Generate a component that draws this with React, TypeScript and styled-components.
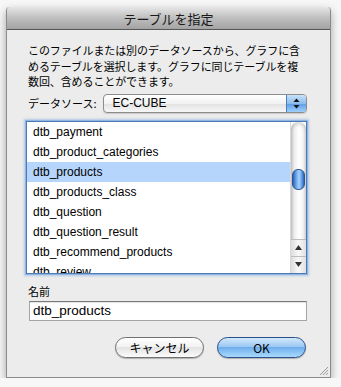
import React from "react"
import styled, { createGlobalStyle } from "styled-components"

const GlobalStyle = createGlobalStyle`
  html, body {
    margin: 0;
    padding: 0;
    background: #f7f7f7;
  }
  body {
    font-family: "Liberation Sans", "Noto Sans CJK JP", sans-serif;
  }
`

const tables = [
  "dtb_payment",
  "dtb_product_categories",
  "dtb_products",
  "dtb_products_class",
  "dtb_question",
  "dtb_question_result",
  "dtb_recommend_products",
  "dtb_review",
]

const jp = `"Noto Sans CJK JP", "Liberation Sans", sans-serif`

const Window = styled.div`
  margin: 7px 0 0 6px;
  width: 325px;
  height: 371px;
  background: #ececec;
  border: 1px solid #8a8a8a;
  border-top: none;
  box-sizing: border-box;
  box-shadow: 0 4px 10px rgba(0, 0, 0, 0.35);
  display: flex;
  flex-direction: column;
  position: relative;
  border-radius: 4px 4px 0 0;
`

const TitleBar = styled.div`
  height: 23px;
  flex: none;
  background: linear-gradient(#e6e6e6, #c2c2c2 45%, #a3a3a3);
  border-bottom: 1px solid #575757;
  border-radius: 4px 4px 0 0;
  box-sizing: border-box;
  display: flex;
  align-items: center;
  justify-content: center;
  font-family: ${jp};
  font-size: 13px;
  color: #1a1a1a;
  padding-top: 1px;
`

const Body = styled.div`
  padding: 13px 23px 0 19px;
  display: flex;
  flex-direction: column;
`

const Description = styled.p`
  margin: 0 0 0 2px;
  font-family: ${jp};
  font-size: 11px;
  line-height: 15.5px;
  color: #000;
  letter-spacing: -0.1px;
`

const SourceRow = styled.div`
  display: flex;
  align-items: center;
  margin-top: 4px;
  gap: 6px;
`

const Label = styled.span`
  font-family: ${jp};
  font-size: 11px;
  color: #000;
  margin-left: 2px;
`

const Popup = styled.div`
  flex: 1;
  height: 19px;
  box-sizing: border-box;
  border: 1px solid #8c8c8c;
  border-radius: 4px;
  background: linear-gradient(#ffffff, #f2f2f2 50%, #e2e2e2 51%, #f7f7f7);
  display: flex;
  align-items: center;
  overflow: hidden;
  box-shadow: 0 1px 1px rgba(0, 0, 0, 0.15);
`

const PopupText = styled.span`
  flex: 1;
  padding-left: 9px;
  font-size: 12px;
  color: #000;
`

const PopupArrows = styled.div`
  width: 19px;
  height: 100%;
  background: linear-gradient(#c9e2fb, #8bbcee 50%, #5d9be6 51%, #9fd0fb);
  border-left: 1px solid #4f7cb8;
  display: flex;
  align-items: center;
  justify-content: center;
`

const ListBox = styled.div`
  margin: 8px 0 0 0;
  height: 153px;
  box-sizing: border-box;
  border: 1px solid #4d79b4;
  box-shadow: 0 0 0 1px #8fb5e3, 0 0 2px 2px rgba(120, 165, 225, 0.5);
  background: #fff;
  display: flex;
  overflow: hidden;
`

const Rows = styled.div`
  flex: 1;
  overflow: hidden;
`

const Row = styled.div<{ selected?: boolean }>`
  height: 20px;
  line-height: 20px;
  padding-left: 6px;
  font-size: 12px;
  color: #000;
  background: ${({ selected }) => (selected ? "#b6d5fc" : "transparent")};
`

const ScrollBar = styled.div`
  width: 15px;
  flex: none;
  display: flex;
  flex-direction: column;
  background: #fff;
  border-left: 1px solid #d8d8d8;
`

const Track = styled.div`
  flex: 1;
  position: relative;
  background: linear-gradient(90deg, #c9c9c9, #f0f0f0 25%, #ffffff 55%, #f3f3f3 80%, #d6d6d6);
  border-radius: 7px 7px 0 0;
  box-shadow: inset 0 3px 3px rgba(0, 0, 0, 0.12);
`

const Thumb = styled.div`
  position: absolute;
  left: 1px;
  right: 1px;
  top: 47px;
  height: 21px;
  border-radius: 6px;
  background: linear-gradient(90deg, #2b62b6, #6ca7ea 30%, #a9d3fb 55%, #5f9ce6 80%, #2d63b3);
  border: 1px solid #2a5598;
  box-sizing: border-box;
`

const ArrowButton = styled.div`
  height: 16px;
  flex: none;
  display: flex;
  align-items: center;
  justify-content: center;
  background: linear-gradient(90deg, #dcdcdc, #f8f8f8 50%, #e0e0e0);
  border-top: 1px solid #bdbdbd;
`

const NameLabel = styled.div`
  font-family: ${jp};
  font-size: 11px;
  color: #000;
  margin: 10px 0 0 2px;
  line-height: 14px;
`

const NameField = styled.input`
  margin: 3px 0 0 3px;
  height: 20px;
  box-sizing: border-box;
  border: 1px solid #a5a5a5;
  border-top-color: #7a7a7a;
  background: #fff;
  font-family: "Liberation Sans", sans-serif;
  font-size: 13.5px;
  padding: 0 3px;
  color: #000;
  outline: none;
  box-shadow: inset 0 1px 1px rgba(0, 0, 0, 0.12);
`

const Buttons = styled.div`
  display: flex;
  justify-content: flex-end;
  gap: 13px;
  margin-top: 16px;
  margin-right: 1px;
`

const Button = styled.button<{ primary?: boolean }>`
  height: 21px;
  width: 89px;
  border-radius: 11px;
  border: 1px solid ${({ primary }) => (primary ? "#2a4f8a" : "#707070")};
  background: ${({ primary }) =>
    primary
      ? "linear-gradient(#d3e8fc, #9cc8f3 45%, #6faeec 50%, #a9dafd)"
      : "linear-gradient(#ffffff, #f3f3f3 45%, #e3e3e3 50%, #fbfbfb)"};
  box-shadow: 0 1px 1px rgba(0, 0, 0, 0.25);
  font-family: ${jp};
  font-size: 12px;
  color: #000;
  padding: 0;
  display: flex;
  align-items: center;
  justify-content: center;
`

const Grip = styled.svg`
  position: absolute;
  right: 1px;
  bottom: 1px;
`

const App = () => {
  return (
    <>
      <GlobalStyle />
      <Window>
        <TitleBar>テーブルを指定</TitleBar>
        <Body>
          <Description>
            このファイルまたは別のデータソースから、グラフに含
            <br />
            めるテーブルを選択します。グラフに同じテーブルを複
            <br />
            数回、含めることができます。
          </Description>
          <SourceRow>
            <Label>データソース:</Label>
            <Popup>
              <PopupText>EC-CUBE</PopupText>
              <PopupArrows>
                <svg width="7" height="11" viewBox="0 0 7 11">
                  <path d="M3.5 0.5 L6.5 4 L0.5 4 Z" fill="#111" />
                  <path d="M3.5 10.5 L6.5 7 L0.5 7 Z" fill="#111" />
                </svg>
              </PopupArrows>
            </Popup>
          </SourceRow>
          <ListBox>
            <Rows>
              {tables.map((t) => (
                <Row key={t} selected={t === "dtb_products"}>
                  {t}
                </Row>
              ))}
            </Rows>
            <ScrollBar>
              <Track>
                <Thumb />
              </Track>
              <ArrowButton>
                <svg width="7" height="5" viewBox="0 0 7 5">
                  <path d="M3.5 0 L7 5 L0 5 Z" fill="#333" />
                </svg>
              </ArrowButton>
              <ArrowButton>
                <svg width="7" height="5" viewBox="0 0 7 5">
                  <path d="M3.5 5 L7 0 L0 0 Z" fill="#333" />
                </svg>
              </ArrowButton>
            </ScrollBar>
          </ListBox>
          <NameLabel>名前</NameLabel>
          <NameField defaultValue="dtb_products" />
          <Buttons>
            <Button>キャンセル</Button>
            <Button primary>OK</Button>
          </Buttons>
        </Body>
        <Grip width="12" height="12" viewBox="0 0 12 12">
          <path d="M11 3 L3 11 M11 6 L6 11 M11 9 L9 11" stroke="#9a9a9a" strokeWidth="1" />
        </Grip>
      </Window>
    </>
  )
}

export default App
